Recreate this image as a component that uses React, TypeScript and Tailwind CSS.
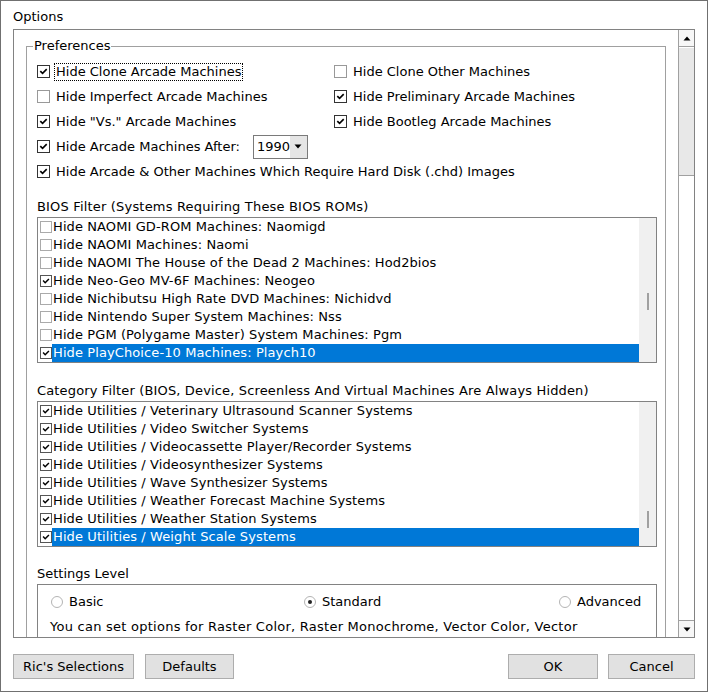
const prefsLeft = [
  { label: 'Hide Clone Arcade Machines', on: true, focus: true },
  { label: 'Hide Imperfect Arcade Machines', on: false },
  { label: 'Hide "Vs." Arcade Machines', on: true },
]
const prefsRight = [
  { label: 'Hide Clone Other Machines', on: false },
  { label: 'Hide Preliminary Arcade Machines', on: true },
  { label: 'Hide Bootleg Arcade Machines', on: true },
]

const biosRows = [
  { label: 'Hide NAOMI GD-ROM Machines: Naomigd', on: false },
  { label: 'Hide NAOMI Machines: Naomi', on: false },
  { label: 'Hide NAOMI The House of the Dead 2 Machines: Hod2bios', on: false },
  { label: 'Hide Neo-Geo MV-6F Machines: Neogeo', on: true },
  { label: 'Hide Nichibutsu High Rate DVD Machines: Nichidvd', on: false },
  { label: 'Hide Nintendo Super System Machines: Nss', on: false },
  { label: 'Hide PGM (Polygame Master) System Machines: Pgm', on: false },
  { label: 'Hide PlayChoice-10 Machines: Playch10', on: true },
]

const categoryRows = [
  'Hide Utilities / Veterinary Ultrasound Scanner Systems',
  'Hide Utilities / Video Switcher Systems',
  'Hide Utilities / Videocassette Player/Recorder Systems',
  'Hide Utilities / Videosynthesizer Systems',
  'Hide Utilities / Wave Synthesizer Systems',
  'Hide Utilities / Weather Forecast Machine Systems',
  'Hide Utilities / Weather Station Systems',
  'Hide Utilities / Weight Scale Systems',
]

const Tick = ({ size }: { size: number }) => (
  <svg width={size} height={size} viewBox="0 0 12 12">
    <path d="M2.5 5.5 L5 8 L9.5 3.5" stroke="#000" strokeWidth="1.8" fill="none" />
  </svg>
)

const Box = ({ on }: { on: boolean }) => (
  <span
    className={`w-[13px] h-[13px] shrink-0 bg-white border flex items-center justify-center ${
      on ? 'border-[#333]' : 'border-[#999]'
    }`}
  >
    {on && <Tick size={11} />}
  </span>
)

const SmallBox = ({ on }: { on: boolean }) => (
  <span
    className={`w-[12px] h-[12px] shrink-0 bg-white border flex items-center justify-center ${
      on ? 'border-[#555]' : 'border-[#aaa]'
    }`}
  >
    {on && <Tick size={10} />}
  </span>
)

const PrefCheck = ({ label, on, focus }: { label: string; on: boolean; focus?: boolean }) => (
  <div className="flex items-center">
    <Box on={on} />
    <span
      className={`ml-[5px] px-[1px] leading-[16px] ${focus ? 'outline outline-1 outline-dotted outline-[#000]' : ''}`}
    >
      {label}
    </span>
  </div>
)

const Arrow = ({ up }: { up?: boolean }) => (
  <svg width="8" height="5" viewBox="0 0 8 5">
    <path d={up ? 'M0.5 4.5 L4 0.5 L7.5 4.5 Z' : 'M0.5 0.5 L7.5 0.5 L4 4.5 Z'} fill="#000" />
  </svg>
)

const ListBox = ({
  rows,
  thumbTop,
}: {
  rows: { label: string; on: boolean }[]
  thumbTop: number
}) => (
  <div className="w-[620px] h-[146px] border border-[#828282] flex bg-white">
    <div className="flex-1 flex flex-col">
      {rows.map((r, i) => {
        const sel = i === rows.length - 1
        return (
          <div key={r.label} className="h-[18px] flex items-center pl-[2px]">
            <SmallBox on={r.on} />
            <span
              className={`flex-1 h-[18px] pl-[1px] leading-[18px] whitespace-nowrap tracking-[0.1px] ${
                sel ? 'bg-[#0078d7] text-white' : ''
              }`}
            >
              {r.label}
            </span>
          </div>
        )
      })}
    </div>
    <div className="w-[17px] bg-[#f0f0f0] flex flex-col items-center" style={{ paddingTop: thumbTop }}>
      <div className="w-[2px] h-[17px] bg-[#a0a0a0]" />
    </div>
  </div>
)

const Radio = ({ on, label }: { on: boolean; label: string }) => (
  <div className="flex items-center">
    <span className="w-[12px] h-[12px] rounded-full border border-[#b4b4b4] bg-white flex items-center justify-center">
      {on && <span className="w-[4px] h-[4px] rounded-full bg-[#222]" />}
    </span>
    <span className="ml-[6px] leading-[16px]">{label}</span>
  </div>
)

const Btn = ({ label, w }: { label: string; w: string }) => (
  <button className={`${w} h-[25px] bg-[#e1e1e1] border border-[#adadad] text-[13px] leading-[16px] text-black`}>
    {label}
  </button>
)

export default function App() {
  return (
    <div className="w-[708px] h-[692px] border border-[#707070] bg-white flex flex-col text-[13px] text-black font-['DejaVu_Sans',sans-serif]">
      <div className="h-[28px] pt-[8px] pl-[12px] leading-[16px]">Options</div>

      <div className="ml-[12px] w-[682px] h-[609px] border border-[#828282] flex">
        <div className="flex-1 overflow-hidden">
          <fieldset className="ml-[12px] mt-[8px] w-[640px] border border-b-0 border-[#a0a0a0] pl-[10px] pt-[5px]">
            <legend className="-ml-[4px] px-[1px] leading-[16px]">Preferences</legend>

            {prefsLeft.map((l, i) => (
              <div key={l.label} className="h-[25px] flex items-center">
                <div className="w-[297px]">
                  <PrefCheck {...l} />
                </div>
                <PrefCheck {...prefsRight[i]} />
              </div>
            ))}
            <div className="h-[25px] flex items-center">
              <PrefCheck label="Hide Arcade Machines After:" on={true} />
              <div className="ml-[12px] w-[55px] h-[24px] border border-[#7a7a7a] flex items-center bg-white">
                <span className="flex-1 pl-[3px] leading-[16px]">1990</span>
                <span className="w-[17px] h-[22px] bg-[#e5e5e5] flex items-center justify-center">
                  <Arrow />
                </span>
              </div>
            </div>
            <div className="h-[25px] flex items-center">
              <PrefCheck label="Hide Arcade & Other Machines Which Require Hard Disk (.chd) Images" on={true} />
            </div>

            <div className="mt-[15px] leading-[16px] tracking-[0.18px]">
              BIOS Filter (Systems Requiring These BIOS ROMs)
            </div>
            <div className="mt-[2px]">
              <ListBox rows={biosRows} thumbTop={75} />
            </div>

            <div className="mt-[20px] leading-[16px] tracking-[0.15px] whitespace-nowrap">
              Category Filter (BIOS, Device, Screenless And Virtual Machines Are Always Hidden)
            </div>
            <div className="mt-[2px]">
              <ListBox rows={categoryRows.map((c) => ({ label: c, on: true }))} thumbTop={109} />
            </div>

            <div className="mt-[19px] leading-[16px]">Settings Level</div>
            <div className="mt-[2px] w-[620px] h-[80px] border border-[#828282] pl-[13px] pt-[8px]">
              <div className="grid grid-cols-[253px_255px_1fr] h-[18px] items-center">
                <Radio on={false} label="Basic" />
                <Radio on={true} label="Standard" />
                <Radio on={false} label="Advanced" />
              </div>
              <div className="mt-[8px] -ml-[1px] leading-[16px] whitespace-nowrap tracking-[0.25px]">
                You can set options for Raster Color, Raster Monochrome, Vector Color, Vector
              </div>
            </div>
          </fieldset>
        </div>

        <div className="w-[16px] border-l border-[#a0a0a0] flex flex-col bg-white">
          <div className="h-[17px] bg-[#f7f7f7] border-b border-[#a0a0a0] flex items-center justify-center">
            <Arrow up />
          </div>
          <div className="h-[129px] bg-[#e8e8e8] border-b border-[#a0a0a0] border-t border-t-white" />
          <div className="flex-1" />
          <div className="h-[17px] bg-[#f7f7f7] border-t border-[#a0a0a0] flex items-center justify-center">
            <Arrow />
          </div>
        </div>
      </div>

      <div className="mt-[16px] px-[12px] flex justify-between">
        <div className="flex gap-[11px]">
          <Btn label="Ric's Selections" w="w-[121px]" />
          <Btn label="Defaults" w="w-[89px]" />
        </div>
        <div className="flex gap-[10px]">
          <Btn label="OK" w="w-[90px]" />
          <Btn label="Cancel" w="w-[87px]" />
        </div>
      </div>
    </div>
  )
}
